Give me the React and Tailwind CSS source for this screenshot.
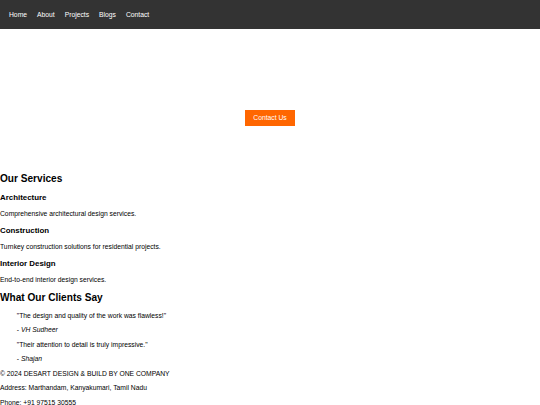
export default function App() {
  const links = ["Home", "About", "Projects", "Blogs", "Contact"];

  return (
    <div className="min-h-screen bg-white text-black font-['Liberation_Sans',Arial,sans-serif] text-[6.75px] leading-[7.75px]">
      {/* Top nav */}
      <nav className="h-[29px] bg-[#333333] flex items-center pl-[9px]">
        <ul className="flex gap-[10px] text-white">
          {links.map((l) => (
            <li key={l}>
              <a href="#">{l}</a>
            </li>
          ))}
        </ul>
      </nav>

      {/* Hero */}
      <section className="h-[136px] flex flex-col items-center pt-[81px]">
        <button className="bg-[#ff6600] text-white px-[8.4px] py-[4.2px] leading-[7.75px]">
          Contact Us
        </button>
      </section>

      {/* Services */}
      <section>
        <h2 className="text-[10.1px] leading-[11.6px] font-bold my-[8.4px]">Our Services</h2>
        <div>
          <h3 className="text-[7.9px] leading-[9.1px] font-bold my-[7.9px]">Architecture</h3>
          <p className="my-[6.75px]">Comprehensive architectural design services.</p>
        </div>
        <div>
          <h3 className="text-[7.9px] leading-[9.1px] font-bold my-[7.9px]">Construction</h3>
          <p className="my-[6.75px]">Turnkey construction solutions for residential projects.</p>
        </div>
        <div>
          <h3 className="text-[7.9px] leading-[9.1px] font-bold my-[7.9px]">Interior Design</h3>
          <p className="my-[6.75px]">End-to-end interior design services.</p>
        </div>
      </section>

      {/* Testimonials */}
      <section>
        <h2 className="text-[10.1px] leading-[11.6px] font-bold my-[8.4px]">What Our Clients Say</h2>
        <blockquote className="mx-[16.8px] my-[6.75px]">
          <p className="my-[6.75px]">"The design and quality of the work was flawless!"</p>
          <p className="my-[6.75px]">
            - <em>VH Sudheer</em>
          </p>
        </blockquote>
        <blockquote className="mx-[16.8px] my-[6.75px]">
          <p className="my-[6.75px]">"Their attention to detail is truly impressive."</p>
          <p className="my-[6.75px]">
            - <em>Shajan</em>
          </p>
        </blockquote>
      </section>

      {/* Footer */}
      <footer className="pb-[8px]">
        <p className="my-[6.75px]">© 2024 DESART DESIGN &amp; BUILD BY ONE COMPANY</p>
        <p className="my-[6.75px]">Address: Marthandam, Kanyakumari, Tamil Nadu</p>
        <p className="my-[6.75px]">Phone: +91 97515 30555</p>
      </footer>
    </div>
  );
}
